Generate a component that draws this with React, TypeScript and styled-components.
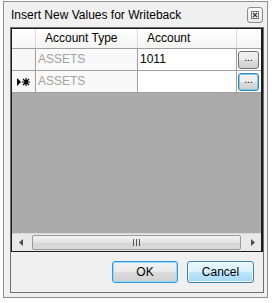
import React from "react";
import styled, { createGlobalStyle } from "styled-components";

const Global = createGlobalStyle`
  body {
    margin: 0;
    background: #ffffff;
    font-family: "Liberation Sans", Arial, sans-serif;
    font-size: 12px;
  }
`;

const Page = styled.div`
  padding: 1px 0 0 3px;
`;

const Window = styled.div`
  box-sizing: border-box;
  width: 265px;
  height: 297px;
  border: 1px solid #8e8e8e;
  background: #f0f0f0;
  display: flex;
  flex-direction: column;
`;

const TitleBar = styled.div`
  height: 25px;
  display: flex;
  align-items: center;
  justify-content: space-between;
  padding: 0 4px 0 7px;
  color: #000;
`;

const CloseBox = styled.div`
  box-sizing: border-box;
  width: 16px;
  height: 16px;
  border: 1px solid #8c8c8c;
  border-radius: 3px;
  background: linear-gradient(#fbfbfb, #e6e6e6);
  display: flex;
  align-items: center;
  justify-content: center;
  margin-top: 1px;
`;

const Panel = styled.div`
  box-sizing: border-box;
  margin: 0 3px 4px 6px;
  height: 266px;
  border: 1px solid #6f6f6f;
  display: flex;
  flex-direction: column;
`;

const Grid = styled.div`
  box-sizing: border-box;
  height: 224px;
  border: 1px solid #1c1c1c;
  border-right-width: 2px;
  background: #ababab;
  display: flex;
  flex-direction: column;
`;

const HeaderRow = styled.div`
  display: flex;
  height: 19px;
  background: linear-gradient(#ffffff, #f4f4f4);
  border-bottom: 1px solid #a0a0a0;
`;

const HeaderCell = styled.div<{ $w: number; $last?: boolean }>`
  box-sizing: border-box;
  width: ${(p) => p.$w}px;
  flex: ${(p) => (p.$last ? 1 : "none")};
  border-right: ${(p) => (p.$last ? "none" : "1px solid #dcdcdc")};
  padding-left: 9px;
  line-height: 19px;
  color: #000;
`;

const Row = styled.div`
  display: flex;
  height: 21px;
  border-bottom: 1px solid #a0a0a0;
`;

const RowHead = styled.div`
  box-sizing: border-box;
  width: 24px;
  background: #f7f7f7;
  border-right: 1px solid #a0a0a0;
  display: flex;
  align-items: center;
  padding-left: 5px;
`;

const Cell = styled.div<{ $w: number; $muted?: boolean }>`
  box-sizing: border-box;
  width: ${(p) => p.$w}px;
  background: ${(p) => (p.$muted ? "#f9f9f9" : "#ffffff")};
  color: ${(p) => (p.$muted ? "#a3a3a3" : "#000")};
  border-right: 1px solid #a0a0a0;
  padding-left: 2px;
  line-height: 21px;
`;

const ButtonCell = styled.div`
  flex: 1;
  background: #ffffff;
  display: flex;
  align-items: center;
  padding-left: 1px;
`;

const Ellipsis = styled.div<{ $focus?: boolean }>`
  box-sizing: border-box;
  width: 21px;
  height: 18px;
  border: 1px solid ${(p) => (p.$focus ? "#3c7fb1" : "#707070")};
  border-radius: 3px;
  background: linear-gradient(#f2f2f2 0%, #ebebeb 50%, #dddddd 51%, #cfcfcf 100%);
  font-size: 10px;
  text-align: center;
  line-height: 12px;
  color: #000;
  box-shadow: ${(p) => (p.$focus ? "inset 0 0 0 1px #7ccbf0" : "none")};
`;

const Spacer = styled.div`
  flex: 1;
`;

const HScroll = styled.div`
  display: flex;
  height: 17px;
  background: #e9e9e9;
  border-top: 1px solid #d8d8d8;
  align-items: center;
`;

const Arrow = styled.div`
  width: 17px;
  height: 17px;
  display: flex;
  align-items: center;
  justify-content: center;
`;

const Thumb = styled.div`
  box-sizing: border-box;
  flex: 1;
  height: 15px;
  margin: 0 3px;
  border: 1px solid #9a9a9a;
  border-radius: 2px;
  background: linear-gradient(#f3f3f3, #e2e2e2 50%, #d4d4d4 51%, #dadada);
  display: flex;
  align-items: center;
  justify-content: center;
`;

const Footer = styled.div`
  flex: 1;
  display: flex;
  justify-content: flex-end;
  align-items: flex-start;
  gap: 9px;
  padding: 9px 9px 0 0;
`;

const DialogButton = styled.button<{ $hover?: boolean; $w: number }>`
  box-sizing: border-box;
  width: ${(p) => p.$w}px;
  height: 22px;
  padding: 0;
  font-family: "Liberation Sans", Arial, sans-serif;
  font-size: 12px;
  color: #000;
  border-radius: 3px;
  border: 1px solid ${(p) => (p.$hover ? "#3c7fb1" : "#3399dd")};
  background: ${(p) =>
    p.$hover
      ? "linear-gradient(#eaf6fd 0%, #d9f0fc 50%, #bee6fd 51%, #a7d9f5 100%)"
      : "linear-gradient(#f2f2f2 0%, #ebebeb 50%, #dddddd 51%, #cfcfcf 100%)"};
  box-shadow: ${(p) => (p.$hover ? "inset 0 0 0 1px #f5fbfe" : "inset 0 0 0 1px #8fdcf9")};
`;

const NewRowGlyph = () => (
  <svg width="13" height="8" viewBox="0 0 13 8">
    <path d="M0 0 L4 4 L0 8 Z" fill="#000" />
    <path d="M9 0 V8 M5 4 H13 M6 1 L12 7 M12 1 L6 7" stroke="#000" strokeWidth="1.2" />
  </svg>
);

const CloseGlyph = () => (
  <svg width="8" height="8" viewBox="0 0 8 8">
    <rect x="0.5" y="0.5" width="7" height="7" fill="none" stroke="#777" />
    <path d="M2 2 L6 6 M6 2 L2 6" stroke="#333" strokeWidth="1.2" />
  </svg>
);

export default function App() {
  return (
    <Page>
      <Global />
      <Window>
        <TitleBar>
          <span>Insert New Values for Writeback</span>
          <CloseBox>
            <CloseGlyph />
          </CloseBox>
        </TitleBar>
        <Panel>
          <Grid>
            <HeaderRow>
              <HeaderCell $w={24} />
              <HeaderCell $w={102}>Account Type</HeaderCell>
              <HeaderCell $w={99}>Account</HeaderCell>
              <HeaderCell $w={23} $last />
            </HeaderRow>
            <Row>
              <RowHead />
              <Cell $w={102} $muted>ASSETS</Cell>
              <Cell $w={99}>1011</Cell>
              <ButtonCell>
                <Ellipsis>...</Ellipsis>
              </ButtonCell>
            </Row>
            <Row>
              <RowHead>
                <NewRowGlyph />
              </RowHead>
              <Cell $w={102} $muted>ASSETS</Cell>
              <Cell $w={99} />
              <ButtonCell>
                <Ellipsis $focus>...</Ellipsis>
              </ButtonCell>
            </Row>
            <Spacer />
            <HScroll>
              <Arrow>
                <svg width="4" height="7" viewBox="0 0 4 7">
                  <path d="M4 0 L0 3.5 L4 7 Z" fill="#4d4d4d" />
                </svg>
              </Arrow>
              <Thumb>
                <svg width="7" height="7" viewBox="0 0 7 7">
                  <path d="M0.5 0 V7 M3.5 0 V7 M6.5 0 V7" stroke="#555" strokeWidth="1" />
                </svg>
              </Thumb>
              <Arrow>
                <svg width="4" height="7" viewBox="0 0 4 7">
                  <path d="M0 0 L4 3.5 L0 7 Z" fill="#4d4d4d" />
                </svg>
              </Arrow>
            </HScroll>
          </Grid>
          <Footer>
            <DialogButton $w={66}>OK</DialogButton>
            <DialogButton $w={67} $hover>
              Cancel
            </DialogButton>
          </Footer>
        </Panel>
      </Window>
    </Page>
  );
}
